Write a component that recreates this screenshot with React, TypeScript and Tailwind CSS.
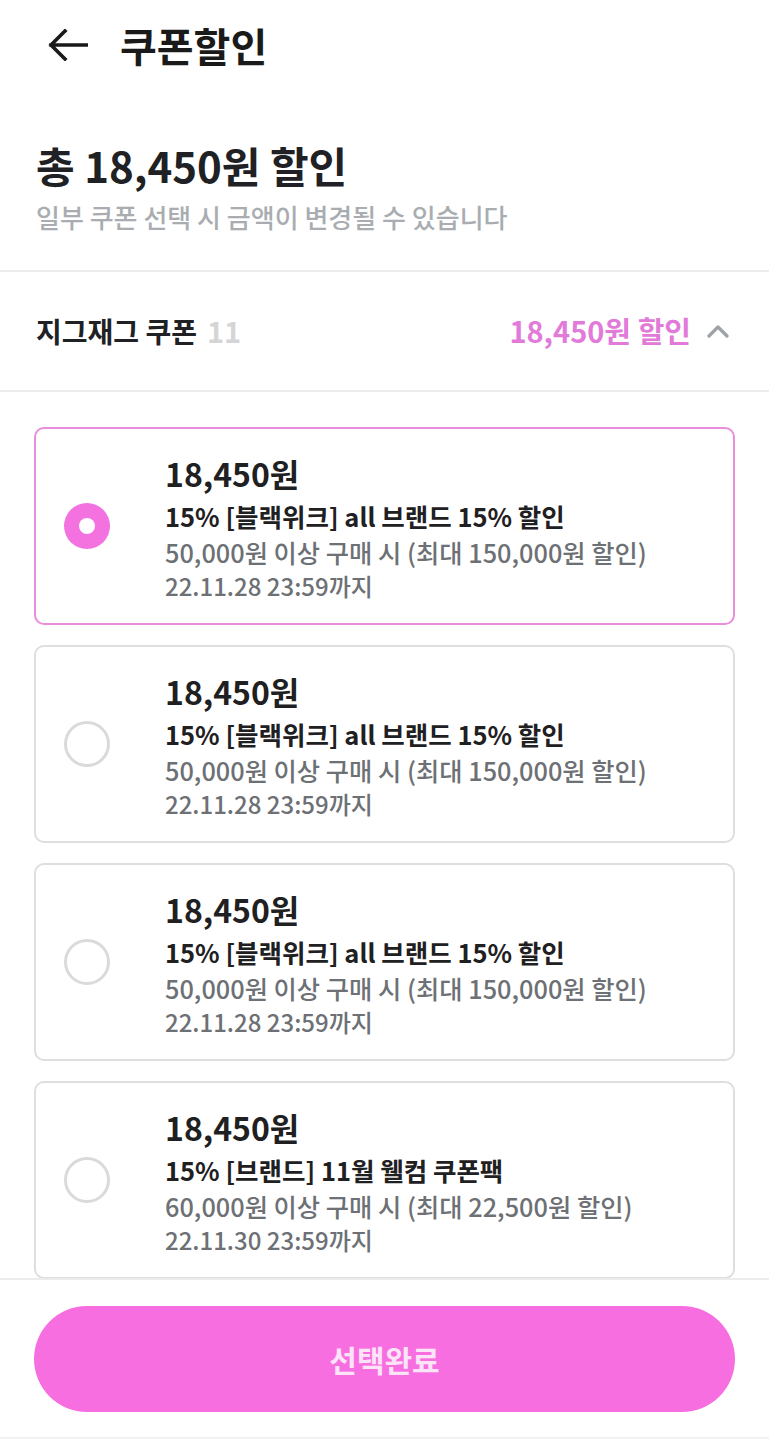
import React from "react";

type Coupon = {
	amount: string;
	title: string;
	condition: string;
	expires: string;
};

const coupons: Coupon[] = [
	{
		amount: "18,450원",
		title: "15% [블랙위크] all 브랜드 15% 할인",
		condition: "50,000원 이상 구매 시 (최대 150,000원 할인)",
		expires: "22.11.28 23:59까지",
	},
	{
		amount: "18,450원",
		title: "15% [블랙위크] all 브랜드 15% 할인",
		condition: "50,000원 이상 구매 시 (최대 150,000원 할인)",
		expires: "22.11.28 23:59까지",
	},
	{
		amount: "18,450원",
		title: "15% [블랙위크] all 브랜드 15% 할인",
		condition: "50,000원 이상 구매 시 (최대 150,000원 할인)",
		expires: "22.11.28 23:59까지",
	},
	{
		amount: "18,450원",
		title: "15% [브랜드] 11월 웰컴 쿠폰팩",
		condition: "60,000원 이상 구매 시 (최대 22,500원 할인)",
		expires: "22.11.30 23:59까지",
	},
];

function Radio({ checked }: { checked: boolean }) {
	if (checked) {
		return (
			<span className="flex h-[46px] w-[46px] shrink-0 items-center justify-center rounded-full bg-[#f472e0]">
				<span className="h-[16px] w-[16px] rounded-full bg-white" />
			</span>
		);
	}
	return (
		<span className="h-[46px] w-[46px] shrink-0 rounded-full border-[3px] border-[#d8dadc]" />
	);
}

function CouponCard({ coupon, selected }: { coupon: Coupon; selected: boolean }) {
	return (
		<div
			className={`flex h-[198px] shrink-0 items-center rounded-[10px] border-2 pl-[28px] ${
				selected ? "border-[#e98ddd]" : "border-[#dcdee0]"
			}`}
		>
			<Radio checked={selected} />
			<div className="ml-[55px] flex flex-col pt-[4px]">
				<div className="text-[32px] font-bold leading-[36px] text-[#1f2022]">
					{coupon.amount}
				</div>
				<div className="mt-[7px] text-[25.5px] font-semibold leading-[36px] text-[#1f2022]">
					{coupon.title}
				</div>
				<div className="text-[25.3px] font-medium leading-[36px] text-[#6d7074]">
					{coupon.condition}
				</div>
				<div className="text-[24px] font-medium leading-[32px] text-[#6d7074]">
					{coupon.expires}
				</div>
			</div>
		</div>
	);
}

export default function App() {
	return (
		<div className="flex h-[1439px] w-full flex-col overflow-hidden bg-white font-['Noto_Sans_CJK_KR',sans-serif]">
			{/* header */}
			<div className="flex h-[90px] shrink-0 items-center pl-[48px]">
				<svg width="40" height="32" viewBox="0 0 40 32" fill="none">
					<path
						d="M39 16H3M17 2L3 16L17 30"
						stroke="#1a1a1a"
						strokeWidth="3.6"
						strokeLinecap="square"
					/>
				</svg>
				<h1 className="ml-[32px] text-[40px] font-bold leading-none text-[#1a1a1a]">
					쿠폰할인
				</h1>
			</div>

			{/* summary */}
			<div className="shrink-0 px-[36px] pt-[51px] pb-[37px]">
				<div className="text-[42px] font-bold leading-[48px] text-[#202124]">
					총 18,450원 할인
				</div>
				<div className="mt-[12px] text-[26px] font-medium leading-[32px] text-[#a9adb1]">
					일부 쿠폰 선택 시 금액이 변경될 수 있습니다
				</div>
			</div>

			<div className="h-[2px] shrink-0 bg-[#ececec]" />

			{/* section */}
			<div className="flex h-[118px] shrink-0 items-center justify-between pl-[36px] pr-[40px]">
				<div className="flex items-center gap-[10px] text-[28px] font-bold text-[#202124]">
					<span>지그재그 쿠폰</span>
					<span className="text-[29px] font-semibold text-[#d3d5d7]">11</span>
				</div>
				<div className="flex items-center gap-[16px]">
					<span className="text-[29px] font-bold text-[#e27ad9]">18,450원 할인</span>
					<svg width="22" height="14" viewBox="0 0 22 14" fill="none">
						<path
							d="M2 12L11 3L20 12"
							stroke="#9ea2a6"
							strokeWidth="3.2"
							strokeLinecap="round"
							strokeLinejoin="round"
						/>
					</svg>
				</div>
			</div>

			<div className="h-[2px] shrink-0 bg-[#ececec]" />

			{/* list */}
			<div className="flex min-h-0 flex-1 flex-col gap-[20px] overflow-hidden px-[34px] pt-[35px]">
				{coupons.map((c, i) => (
					<CouponCard key={i} coupon={c} selected={i === 0} />
				))}
			</div>

			{/* footer */}
			<div className="shrink-0 border-t-2 border-[#ececec] px-[34px] pt-[26px] pb-[25px]">
				<button className="flex h-[106px] w-full items-center justify-center rounded-full bg-[#f76ee0] text-[30px] font-bold text-[#fde3f7]">
					선택완료
				</button>
			</div>
			<div className="h-[2px] shrink-0 bg-[#f2f2f2]" />
		</div>
	);
}
